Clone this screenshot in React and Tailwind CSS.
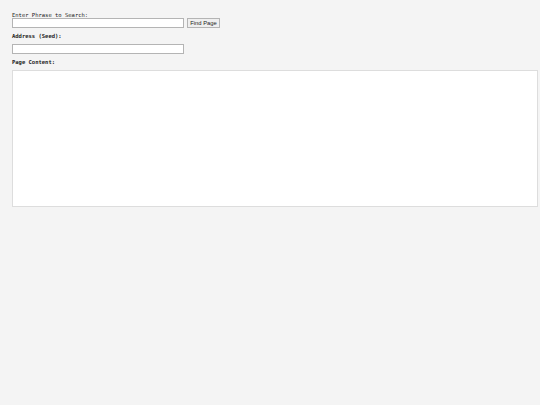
export default function App() {
  return (
    <div className="min-h-[405px] w-[540px] bg-[#f4f4f4] pt-[12px] pl-[12px] pr-[2px] font-['DejaVu_Sans_Mono',monospace] text-[#222]">
      <div className="text-[5.5px] leading-[6px]">Enter Phrase to Search:</div>
      <div className="flex items-center gap-[3px]">
        <input className="w-[172px] h-[10px] bg-white border border-[#b4b4b4] outline-none" />
        <button className="h-[10px] w-[33px] bg-[#efefef] border border-[#b4b4b4] text-[5.8px] leading-[8px] font-['Liberation_Sans',sans-serif] text-[#222]">Find Page</button>
      </div>
      <div className="text-[5.5px] leading-[6px] font-bold mt-[5px]">Address (Seed):</div>
      <input className="mt-[5px] block w-[172px] h-[10px] bg-white border border-[#b4b4b4] outline-none" />
      <div className="text-[5.5px] leading-[6px] font-bold mt-[5px]">Page Content:</div>
      <textarea className="mt-[5px] block w-[526px] h-[137px] bg-white border border-[#ddd] resize-none outline-none" />
    </div>
  );
}
